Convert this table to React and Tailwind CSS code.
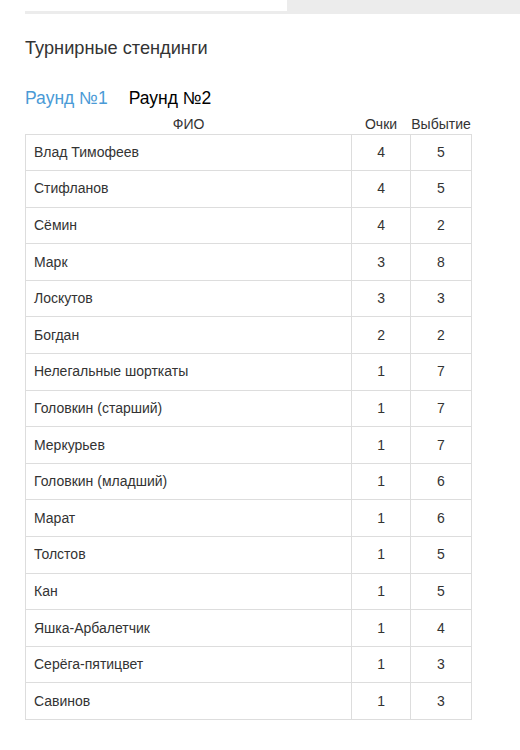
const rows = [
  ["Влад Тимофеев", 4, 5],
  ["Стифланов", 4, 5],
  ["Сёмин", 4, 2],
  ["Марк", 3, 8],
  ["Лоскутов", 3, 3],
  ["Богдан", 2, 2],
  ["Нелегальные шорткаты", 1, 7],
  ["Головкин (старший)", 1, 7],
  ["Меркурьев", 1, 7],
  ["Головкин (младший)", 1, 6],
  ["Марат", 1, 6],
  ["Толстов", 1, 5],
  ["Кан", 1, 5],
  ["Яшка-Арбалетчик", 1, 4],
  ["Серёга-пятицвет", 1, 3],
  ["Савинов", 1, 3],
];

export default function App() {
  return (
    <div className="w-[520px] h-[750px] bg-white text-[#333] font-['Liberation_Sans',Arial,sans-serif] overflow-hidden">
      {/* top strip */}
      <div className="flex h-[11px]">
        <div className="w-[287px]" />
        <div className="flex-1 bg-[#ececec]" />
      </div>
      <div className="ml-[25px] h-[3px] bg-[#ececec]" />

      <div className="pl-[25px]">
        <h2 className="mt-[24px] text-[18.2px] leading-[20px]">Турнирные стендинги</h2>

        <div className="mt-[29px] flex gap-[21px] text-[17.5px] leading-[22px]">
          <span className="text-[#4a9ad6]">Раунд №1</span>
          <span className="text-black">Раунд №2</span>
        </div>

        <table className="mt-[5px] w-[447px] border-collapse text-[14px]">
          <thead>
            <tr className="h-[20px] text-[14px] leading-[16px]">
              <th className="w-[327px] font-normal text-center">ФИО</th>
              <th className="w-[59px] font-normal text-center">Очки</th>
              <th className="w-[61px] font-normal text-center">Выбытие</th>
            </tr>
          </thead>
          <tbody>
            {rows.map(([name, pts, out]) => (
              <tr key={name} className="h-[36.6px]">
                <td className="border border-[#dddddd] pl-[8px]">{name}</td>
                <td className="border border-[#dddddd] text-center">{pts}</td>
                <td className="border border-[#dddddd] text-center">{out}</td>
              </tr>
            ))}
          </tbody>
        </table>
      </div>
    </div>
  );
}
